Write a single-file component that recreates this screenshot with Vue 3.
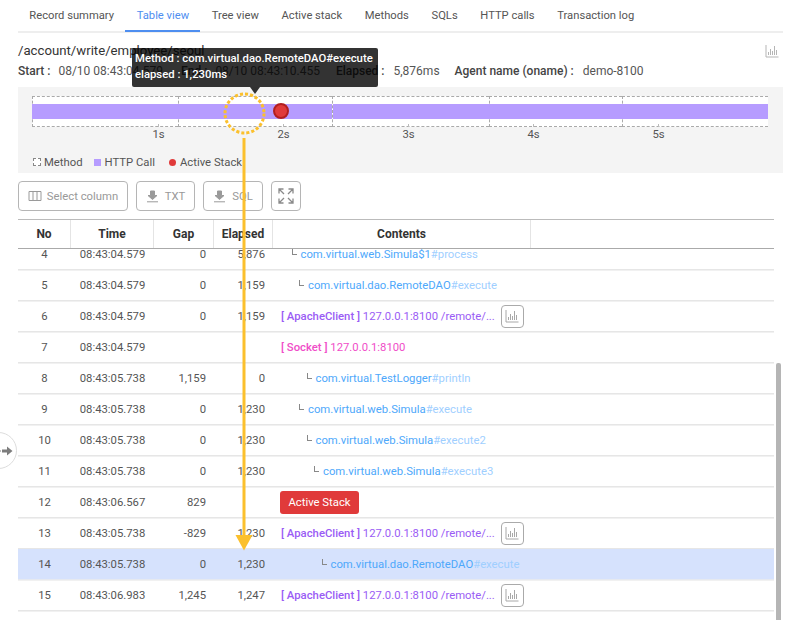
<template>
  <div class="page">
    <div class="tabs">
      <div v-for="tab in tabs" :key="tab" class="tab" :class="{ active: tab === 'Table view' }">{{ tab }}</div>
    </div>

    <div class="titleRow">
      <h1>/account/write/employee/seoul</h1>
      <svg class="chartIcon" width="14" height="14" viewBox="0 0 14 14">
        <path d="M1 1v12h12.500M3.500 11V8M5.500 11V5M7.500 11V7M9.500 11V2M11.500 11V6" fill="none" stroke="#b5b5b5" stroke-width="1" />
      </svg>
    </div>

    <div class="summary">
      <b class="sumStart">Start :</b><span class="sumStartVal">08/10 08:43:04.579</span>
      <b class="sumEnd">End :</b><span class="sumEndVal">08/10 08:43:10.455</span>
      <b class="sumElapsed">Elapsed :</b><span class="sumElapsedVal">5,876ms</span>
      <b class="sumAgent">Agent name (oname) :</b><span>demo-8100</span>
    </div>

    <div class="chart">
      <div class="track">
        <div v-for="(w, idx) in segments" :key="idx" class="segment" :style="{ width: w + 'px' }"></div>
        <div class="bar">
          <div class="barPart first"></div>
          <div class="barPart second"></div>
          <div class="barPart third"></div>
        </div>
        <div class="dot"></div>
        <i v-for="n in 5" :key="n" class="tick" :style="{ left: n * 125 + 1 + 'px' }"></i>
      </div>
      <div class="axis">
        <span v-for="n in 5" :key="n">{{ n }}s</span>
      </div>
      <div class="legend">
        <span class="legendBox method"></span><span class="legendText methodText">Method</span>
        <span class="legendBox http"></span><span class="legendText httpText">HTTP Call</span>
        <span class="legendBox active"></span><span class="legendText">Active Stack</span>
      </div>
    </div>

    <div class="toolbar">
      <button class="btn selectBtn">
        <svg width="14" height="12" viewBox="0 0 14 12">
          <path d="M1 1.500h12v9H1zM5 1.500v9M9 1.500v9" fill="none" stroke="#9a9a9a" stroke-width="1" />
        </svg>
        Select column
      </button>
      <button class="btn dlBtn txtBtn">
        <svg width="13" height="13" viewBox="0 0 13 13">
          <path d="M4.500 1h4v4.500h2.500L6.500 9.500 2 5.500h2.500zM1 11.800h11" fill="#9a9a9a" stroke="#9a9a9a" stroke-width="1" />
        </svg>
        TXT
      </button>
      <button class="btn dlBtn">
        <svg width="13" height="13" viewBox="0 0 13 13">
          <path d="M4.500 1h4v4.500h2.500L6.500 9.500 2 5.500h2.500zM1 11.800h11" fill="#9a9a9a" stroke="#9a9a9a" stroke-width="1" />
        </svg>
        SQL
      </button>
      <button class="btn expandBtn">
        <svg width="16" height="16" viewBox="0 0 16 16">
          <path d="M1 5.500V1h4.500M1 1l5 5M15 5.500V1h-4.500M15 1l-5 5M1 10.500V15h4.500M1 15l5-5M15 10.500V15h-4.500M15 15l-5-5" fill="none" stroke="#8a8a8a" stroke-width="1.300" />
        </svg>
      </button>
    </div>

    <div class="tableWrap">
      <div class="headRow">
        <div class="th no">No</div>
        <div class="th time">Time</div>
        <div class="th gap">Gap</div>
        <div class="th elapsed">Elapsed</div>
        <div class="th contents">Contents</div>
        <div class="th rest"></div>
      </div>
      <div class="tableBody">
        <div class="rowsInner">
          <div v-for="row in rows" :key="row.no" class="row" :class="{ selected: row.no === 14 }">
            <div class="td no">{{ row.no }}</div>
            <div class="td time">{{ row.time }}</div>
            <div class="td gap right">{{ row.gap }}</div>
            <div class="td elapsed right">{{ row.elapsed }}</div>
            <div class="td contents">
              <template v-if="row.type === 'method'">
                <span class="indent" :style="{ width: row.depth * 7.5 + 3 + 'px' }"></span>
                <span class="corner"></span>
                <span class="cls">{{ row.cls }}</span><span class="hash">{{ row.method }}</span>
              </template>
              <template v-else-if="row.type === 'http'">
                <span class="httpCall"><b>[ ApacheClient ]</b> 127.0.0.1:8100 /remote/...</span>
                <span class="statBtn">
                  <svg width="14" height="14" viewBox="0 0 14 14">
                    <path d="M1 1v12h12.500M3.500 11V8M5.500 11V5M7.500 11V7M9.500 11V2M11.500 11V6" fill="none" stroke="#a8a8a8" stroke-width="1" />
                  </svg>
                </span>
              </template>
              <span v-else-if="row.type === 'socket'" class="socket"><b>[ Socket ]</b> 127.0.0.1:8100</span>
              <span v-else class="stackBtn">Active Stack</span>
            </div>
          </div>
        </div>
      </div>
      <div class="scrollbar"></div>
    </div>

    <div class="handle">
      <svg width="14" height="12" viewBox="0 0 14 12">
        <path d="M0 5h1.500v2H0zM3 4.500h5V1.500L13.500 6 8 10.500V7.500H3z" fill="#7d7d7d" />
      </svg>
    </div>

    <div class="tooltip">
      <div>Method : com.virtual.dao.RemoteDAO#execute</div>
      <div>elapsed : 1,230ms</div>
    </div>

    <svg class="callout" width="800" height="620" viewBox="0 0 800 620">
      <circle cx="244.500" cy="113.500" r="19.500" fill="none" stroke="#fbc02d" stroke-width="3" stroke-dasharray="3.100 2" />
      <path d="M244 138V537" stroke="#fbc02d" stroke-width="3" />
      <path d="M235.500 535h17L244 550.500z" fill="#fbc02d" />
    </svg>
  </div>
</template>

<script setup>
const tabs = [
  "Record summary",
  "Table view",
  "Tree view",
  "Active stack",
  "Methods",
  "SQLs",
  "HTTP calls",
  "Transaction log",
];

const segments = [146, 154, 157, 133, 146];

const method = (no, time, gap, elapsed, depth, cls, name) => ({
  no, time, gap, elapsed, depth, cls, method: name, type: "method",
});

const rows = [
  method(4, "08:43:04.579", "0", "5,876", 1, "com.virtual.web.Simula$1", "#process"),
  method(5, "08:43:04.579", "0", "1,159", 2, "com.virtual.dao.RemoteDAO", "#execute"),
  { no: 6, time: "08:43:04.579", gap: "0", elapsed: "1,159", type: "http" },
  { no: 7, time: "08:43:04.579", gap: "", elapsed: "", type: "socket" },
  method(8, "08:43:05.738", "1,159", "0", 3, "com.virtual.TestLogger", "#println"),
  method(9, "08:43:05.738", "0", "1,230", 2, "com.virtual.web.Simula", "#execute"),
  method(10, "08:43:05.738", "0", "1,230", 3, "com.virtual.web.Simula", "#execute2"),
  method(11, "08:43:05.738", "0", "1,230", 4, "com.virtual.web.Simula", "#execute3"),
  { no: 12, time: "08:43:06.567", gap: "829", elapsed: "", type: "stack" },
  { no: 13, time: "08:43:05.738", gap: "-829", elapsed: "1,230", type: "http" },
  method(14, "08:43:05.738", "0", "1,230", 5, "com.virtual.dao.RemoteDAO", "#execute"),
  { no: 15, time: "08:43:06.983", gap: "1,245", elapsed: "1,247", type: "http" },
];
</script>

<style>
html,
body {
  margin: 0;
  background: #fff;
}
</style>

<style scoped>
.page {
  position: relative;
  width: 800px;
  height: 620px;
  overflow: hidden;
  padding: 0 17px 0 18px;
  box-sizing: border-box;
  font-family: Roboto, "Liberation Sans", sans-serif;
  font-size: 11.3px;
  color: #555;
  background: #fff;
}
.tabs {
  display: flex;
  height: 33px;
  box-sizing: border-box;
  border-bottom: 2px solid #eee;
}
.tab {
  height: 32px;
  line-height: 32px;
  padding: 0 11.350px;
  box-sizing: border-box;
  font-size: 11.200px;
  color: #555;
}
.tab.active {
  color: #4e8ef0;
  border-bottom: 2px solid #4e8ef0;
}
.titleRow {
  display: flex;
  justify-content: space-between;
  align-items: center;
  height: 19px;
  margin-top: 8px;
  padding-right: 4px;
}
h1 {
  margin: 0;
  font-size: 13.200px;
  font-weight: 400;
  color: #333;
}
.summary {
  display: flex;
  align-items: center;
  height: 16px;
  margin-top: 3px;
  font-size: 12px;
  color: #555;
}
.summary b {
  font-weight: 500;
  color: #444;
}
.sumStartVal {
  margin-left: 8px;
}
.sumEnd {
  margin-left: 18px;
}
.sumEndVal {
  margin-left: 8px;
}
.sumElapsed {
  margin-left: 16px;
}
.sumElapsedVal {
  margin-left: 9px;
}
.sumAgent {
  margin-left: 15px;
  margin-right: 9px;
}
.chart {
  height: 86px;
  margin-top: 8px;
  padding: 9px 15px 0 14px;
  box-sizing: border-box;
  background: #f4f4f4;
}
.track {
  position: relative;
  display: flex;
  height: 31px;
  background: #fff;
}
.segment {
  box-sizing: border-box;
  border: 1px dashed #aaa;
  border-right: none;
}
.segment:last-of-type {
  border-right: 1px dashed #aaa;
}
.bar {
  position: absolute;
  top: 8px;
  left: 0;
  right: 0;
  height: 15px;
  display: flex;
}
.barPart {
  background: #b69cff;
}
.barPart.first {
  width: 300px;
}
.barPart.second {
  width: 289px;
  margin-left: 1px;
}
.barPart.third {
  flex: 1;
}
.dot {
  position: absolute;
  left: 241px;
  top: 7px;
  width: 16px;
  height: 16px;
  box-sizing: border-box;
  border-radius: 50%;
  background: #e03a3a;
  border: 2px solid #b21f1f;
}
.tick {
  position: absolute;
  bottom: 0;
  width: 1px;
  height: 3px;
  background: #bbb;
}
.axis {
  display: flex;
  padding-left: 64px;
  height: 15px;
  line-height: 15px;
  color: #555;
}
.axis span {
  width: 125px;
  text-align: center;
}
.legend {
  display: flex;
  align-items: center;
  height: 16px;
  margin-top: 12px;
  padding-left: 1px;
}
.legendBox {
  display: inline-block;
  width: 7px;
  height: 7px;
  box-sizing: border-box;
  margin-right: 4px;
}
.legendBox.method {
  width: 8px;
  height: 8px;
  margin-right: 3px;
  border: 1px dashed #888;
  background: #fff;
}
.legendBox.http {
  background: #b69cff;
}
.legendBox.active {
  background: #e03a3a;
  border-radius: 50%;
}
.methodText {
  margin-right: 11px;
}
.httpText {
  margin-right: 14px;
}
.toolbar {
  display: flex;
  gap: 8px;
  margin-top: 8px;
}
.btn {
  display: flex;
  align-items: center;
  justify-content: center;
  gap: 5px;
  height: 30px;
  padding: 0;
  box-sizing: border-box;
  border: 1px solid #b5b5b5;
  border-radius: 4px;
  background: #fff;
  color: #999;
  font-family: inherit;
  font-size: 11.300px;
}
.selectBtn {
  width: 110px;
}
.dlBtn {
  width: 60px;
  gap: 6px;
}
.txtBtn {
  width: 59px;
}
.expandBtn {
  width: 30px;
}
.tableWrap {
  position: relative;
  width: 756px;
  margin-top: 8px;
}
.headRow {
  display: flex;
  height: 30px;
  box-sizing: border-box;
  border-top: 1px solid #bbb;
  border-bottom: 1px solid #aaa;
}
.th {
  display: flex;
  align-items: center;
  justify-content: center;
  box-sizing: border-box;
  font-size: 12px;
  font-weight: 700;
  color: #333;
  border-right: 1px solid #e4e4e4;
}
.th.rest {
  border-right: none;
  flex: 1;
}
.no {
  width: 53px;
}
.time {
  width: 83px;
}
.gap {
  width: 60px;
}
.elapsed {
  width: 59px;
}
.contents {
  width: 258px;
}
.tableBody {
  height: 380px;
  overflow: hidden;
}
.rowsInner {
  margin-top: -10px;
}
.row {
  display: flex;
  align-items: center;
  height: 31px;
  box-sizing: border-box;
  border-bottom: 1px solid #e6e6e6;
  box-shadow: 0 1px 0 #f1f1f1;
}
.row.selected {
  background: #d6e2fd;
  border-bottom-color: #e6e9f0;
}
.td {
  flex-shrink: 0;
  box-sizing: border-box;
  text-align: center;
  color: #555;
}
.td.right {
  text-align: right;
  padding-right: 8px;
}
.td.contents {
  display: flex;
  align-items: center;
  flex: 1;
  padding-left: 8px;
  text-align: left;
}
.indent {
  display: inline-block;
  flex-shrink: 0;
}
.corner {
  flex-shrink: 0;
  width: 5px;
  height: 6px;
  margin: -4px 4px 0 0;
  box-sizing: border-box;
  border-left: 1px solid #888;
  border-bottom: 1px solid #888;
}
.cls {
  color: #4ea8fb;
}
.hash {
  color: #9fcfff;
}
.httpCall {
  color: #9a5cf5;
}
.httpCall b,
.socket b {
  font-weight: 500;
}
.socket {
  color: #f04dc8;
}
.statBtn {
  display: flex;
  align-items: center;
  justify-content: center;
  width: 23px;
  height: 23px;
  margin-left: 6px;
  box-sizing: border-box;
  border: 1px solid #aaa;
  border-radius: 4px;
  background: #fff;
}
.stackBtn {
  display: inline-block;
  width: 79px;
  height: 23px;
  margin-left: -1px;
  line-height: 23px;
  text-align: center;
  border-radius: 3px;
  background: #e03a3a;
  color: #fff;
}
.scrollbar {
  position: absolute;
  left: 758px;
  top: 144px;
  width: 5px;
  height: 300px;
  border-radius: 2px;
  background: #b5b5b5;
}
.handle {
  position: absolute;
  left: -20px;
  top: 432px;
  display: flex;
  align-items: center;
  justify-content: flex-end;
  width: 37px;
  height: 37px;
  padding-right: 3px;
  box-sizing: border-box;
  border: 1px solid #ddd;
  border-radius: 50%;
  background: #fff;
}
.tooltip {
  position: absolute;
  left: 132px;
  top: 48px;
  width: 246px;
  height: 39px;
  padding: 3px 3px;
  box-sizing: border-box;
  border-radius: 2px;
  background: rgba(0, 0, 0, 0.8);
  color: #fff;
  font-weight: 500;
  line-height: 16px;
  white-space: nowrap;
}
.tooltip::after {
  content: "";
  position: absolute;
  left: 118px;
  top: 39px;
  border: 5px solid transparent;
  border-top: 7px solid rgba(0, 0, 0, 0.8);
  border-bottom: none;
}
.callout {
  position: absolute;
  left: 0;
  top: 0;
  pointer-events: none;
}
</style>
